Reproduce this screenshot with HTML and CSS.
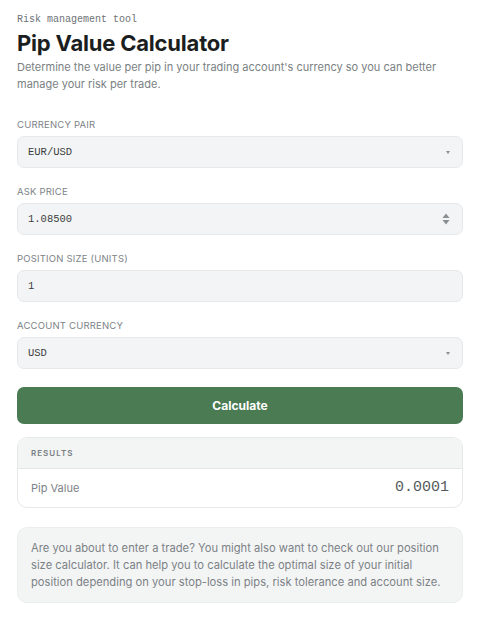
FILE: index.html
```html
<!DOCTYPE html>
<html lang="en">
<head>
    <meta charset="UTF-8">
    <meta name="viewport" content="width=device-width, initial-scale=1.0">
    <title>Pip Value Calculator</title>
    <link rel="stylesheet" href="styles.css">
</head>
<body>
    <div class="page">
        <p class="eyebrow">Risk management tool</p>
        <h1>Pip Value Calculator</h1>
        <p class="intro">Determine the value per pip in your trading account's currency so you can better manage your risk per trade.</p>

        <form class="calc" onsubmit="return false">
            <div class="group">
                <label for="pair">Currency Pair</label>
                <div class="field">
                    <select id="pair">
                        <option>EUR/USD</option>
                        <option>GBP/USD</option>
                        <option>USD/JPY</option>
                    </select>
                    <span class="caret"></span>
                </div>
            </div>
            <div class="group">
                <label for="ask">Ask Price</label>
                <div class="field">
                    <input id="ask" type="text" value="1.08500">
                    <span class="spin">
                        <svg width="8" height="12" viewBox="0 0 8 12"><path d="M4 0.5 L7.5 5 L0.5 5 Z" fill="#8a8f94"/><path d="M4 11.5 L7.5 7 L0.5 7 Z" fill="#8a8f94"/></svg>
                    </span>
                </div>
            </div>
            <div class="group">
                <label for="size">Position Size (Units)</label>
                <div class="field">
                    <input id="size" type="text" value="1">
                </div>
            </div>
            <div class="group">
                <label for="account">Account Currency</label>
                <div class="field">
                    <select id="account">
                        <option>USD</option>
                        <option>EUR</option>
                    </select>
                    <span class="caret"></span>
                </div>
            </div>
            <button type="button">Calculate</button>
        </form>

        <div class="results">
            <div class="results-head">Results</div>
            <div class="results-row">
                <span>Pip Value</span>
                <span class="value">0.0001</span>
            </div>
        </div>

        <div class="note">
            Are you about to enter a trade? You might also want to check out our position size calculator. It can help you to calculate the optimal size of your initial position depending on your stop-loss in pips, risk tolerance and account size.
        </div>
    </div>
</body>
</html>
```

FILE: styles.css
```css
body {
    font-family: Inter, 'Noto Sans', sans-serif;
    background-color: #fff;
    margin: 0;
    color: #1d2022;
}
.page {
    padding: 14px 27px 20px 17px;
}
.eyebrow {
    font-family: 'Liberation Mono', monospace;
    font-size: 10px;
    color: #6d7276;
    margin: 0;
}
h1 {
    font-size: 22px;
    font-weight: 700;
    letter-spacing: -0.2px;
    margin: 5px 0 3px;
    color: #1b1e20;
}
.intro {
    font-size: 11px;
    line-height: 17px;
    color: #7a7f83;
    margin: 0 0 26px;
}
.calc {
    display: flex;
    flex-direction: column;
    gap: 18px;
}
.group label {
    display: block;
    font-size: 9.5px;
    text-transform: uppercase;
    letter-spacing: 0.2px;
    color: #7d8286;
    margin-bottom: 6px;
}
.field {
    display: flex;
    align-items: center;
    height: 30px;
    background-color: #f3f4f5;
    border: 1px solid #e6e8ea;
    border-radius: 7px;
    padding: 0 12px 0 10px;
}
.field select,
.field input {
    flex: 1;
    appearance: none;
    -webkit-appearance: none;
    border: none;
    background: transparent;
    font-family: 'Liberation Mono', monospace;
    font-size: 10.5px;
    color: #3b3f42;
    padding: 0;
    outline: none;
    height: 100%;
}
.caret {
    width: 0;
    height: 0;
    border-left: 2.5px solid transparent;
    border-right: 2.5px solid transparent;
    border-top: 3px solid #8a8f94;
}
.spin {
    display: flex;
}
button {
    height: 37px;
    background-color: #4b7b53;
    color: #fff;
    font-family: Inter, sans-serif;
    font-size: 12px;
    font-weight: 700;
    border: none;
    border-radius: 7px;
    cursor: pointer;
}
.results {
    margin-top: 13px;
    border: 1px solid #e6e9e7;
    border-radius: 10px;
    overflow: hidden;
}
.results-head {
    background-color: #f3f5f4;
    border-bottom: 1px solid #e3e6e4;
    font-size: 8px;
    letter-spacing: 1px;
    font-weight: 600;
    text-transform: uppercase;
    color: #7a7f83;
    padding: 10px 13px 10px;
}
.results-row {
    display: flex;
    justify-content: space-between;
    align-items: center;
    padding: 10px 13px 11px;
    font-size: 11px;
    color: #7c8185;
}
.results-row .value {
    font-family: 'Liberation Mono', monospace;
    font-size: 15px;
    color: #55595c;
}
.note {
    margin-top: 19px;
    background-color: #f3f5f5;
    border: 1px solid #eceeee;
    border-radius: 10px;
    padding: 12px 13px 11px;
    font-size: 11.2px;
    line-height: 17px;
    color: #7c8185;
}
```
